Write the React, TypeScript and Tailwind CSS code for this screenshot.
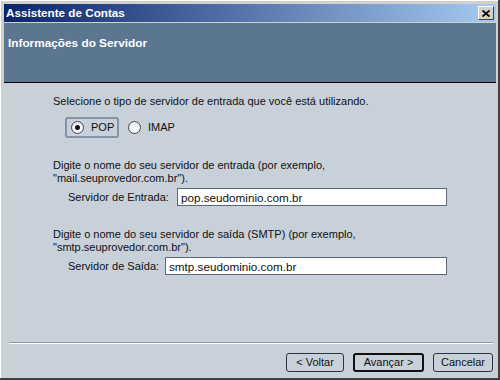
import React, { useState } from "react";

const font = { fontFamily: '"Liberation Sans", Arial, sans-serif' };

const Radio = ({ checked }: { checked: boolean }) => (
    <span className="w-[13px] h-[13px] rounded-full border border-[#3d4a58] bg-[radial-gradient(circle_at_60%_60%,#ffffff,#dfe6ee)] flex items-center justify-center">
        {checked && <span className="w-[5px] h-[5px] rounded-full bg-[#111]" />}
    </span>
);

const WizardButton = ({
    label,
    primary,
}: {
    label: string;
    primary?: boolean;
}) => (
    <button
        className={
            primary
                ? "h-[19px] w-full rounded-[3px] border-2 border-[#111] bg-[#c8d0da] text-[11px] text-[#111] leading-none"
                : "h-[19px] w-full rounded-[3px] border border-[#2c3440] bg-[#c8d0da] text-[11px] text-[#111] leading-none"
        }
    >
        {label}
    </button>
);

const App = () => {
    const [serverType, setServerType] = useState("pop");
    const [incoming, setIncoming] = useState("pop.seudominio.com.br");
    const [outgoing, setOutgoing] = useState("smtp.seudominio.com.br");

    return (
        <div
            className="w-[500px] h-[380px] bg-[#d4d0c8] border-r-2 border-b-2 border-r-[#404040] border-b-[#404040] flex flex-col overflow-hidden"
            style={font}
        >
            <div className="flex-1 border-l border-t border-white flex flex-col pl-[1px]">
                {/* title bar */}
                <div className="mt-[3px] ml-[2px] mr-[2px] h-[18px] bg-[linear-gradient(to_right,#0a246a,#a6caf0)] flex items-center justify-between pl-[2px] pr-[2px]">
                    <span className="text-white font-bold text-[11.7px] leading-none">
                        Assistente de Contas
                    </span>
                    <button className="w-[16px] h-[14px] bg-[#d4d0c8] border border-t-white border-l-white border-r-[#404040] border-b-[#404040] flex items-center justify-center">
                        <svg width="8" height="7" viewBox="0 0 8 7">
                            <path
                                d="M0.5 0.5 L7.5 6.5 M7.5 0.5 L0.5 6.5"
                                stroke="#000"
                                strokeWidth="1.8"
                            />
                        </svg>
                    </button>
                </div>
                <div className="h-[1px] ml-[2px] mr-[2px] bg-[#d4d0c8]" />
                {/* header */}
                <div className="ml-[2px] mr-[2px] h-[60px] bg-[#5b7690] border-b border-black pl-[4px] pt-[7px]">
                    <span className="text-white font-bold text-[11.8px]">
                        Informações do Servidor
                    </span>
                </div>
                {/* body */}
                <div className="flex-1 bg-[#c8d0da] flex flex-col text-[11px] leading-[13px] text-[#111]">
                    <div className="pl-[51px] pt-[12px]">
                        <p>Selecione o tipo de servidor de entrada que você está utilizando.</p>
                        <div className="mt-[9px] ml-[12px] flex items-center gap-[9px]">
                            <label
                                className="h-[21px] w-[54px] rounded-[3px] border-2 border-[#8393a5] flex items-center gap-[7px] pl-[4px]"
                                onClick={() => setServerType("pop")}
                            >
                                <Radio checked={serverType === "pop"} />
                                <span>POP</span>
                            </label>
                            <label
                                className="flex items-center gap-[7px]"
                                onClick={() => setServerType("imap")}
                            >
                                <Radio checked={serverType === "imap"} />
                                <span>IMAP</span>
                            </label>
                        </div>

                        <p className="mt-[21px]">
                            Digite o nome do seu servidor de entrada (por exemplo,
                            <br />
                            "mail.seuprovedor.com.br").
                        </p>
                        <div className="mt-[3px] ml-[15px] flex items-center">
                            <span className="w-[109px]">Servidor de Entrada:</span>
                            <input
                                value={incoming}
                                onChange={(e) => setIncoming(e.target.value)}
                                className="w-[270px] h-[18px] bg-white border border-[#5a6878] px-[3px] text-[11.7px] text-[#111] outline-none"
                            />
                        </div>

                        <p className="mt-[22px]">
                            Digite o nome do seu servidor de saída (SMTP) (por exemplo,
                            <br />
                            "smtp.seuprovedor.com.br").
                        </p>
                        <div className="mt-[3px] ml-[15px] flex items-center">
                            <span className="w-[97px]">Servidor de Saída:</span>
                            <input
                                value={outgoing}
                                onChange={(e) => setOutgoing(e.target.value)}
                                className="w-[282px] h-[18px] bg-white border border-[#5a6878] px-[3px] text-[11.7px] text-[#111] outline-none"
                            />
                        </div>
                    </div>

                    <div className="mt-auto ml-[7px] mr-[5px] border-t border-[#8a94a2] border-b border-b-white" />
                    <div className="mt-[9px] mb-[6px] mr-[5px] flex justify-end gap-[9px]">
                        <span className="w-[58px] flex">
                            <WizardButton label="< Voltar" />
                        </span>
                        <span className="w-[71px] flex">
                            <WizardButton label="Avançar >" primary />
                        </span>
                        <span className="w-[60px] flex">
                            <WizardButton label="Cancelar" />
                        </span>
                    </div>
                </div>
            </div>
        </div>
    );
};

export default App;
